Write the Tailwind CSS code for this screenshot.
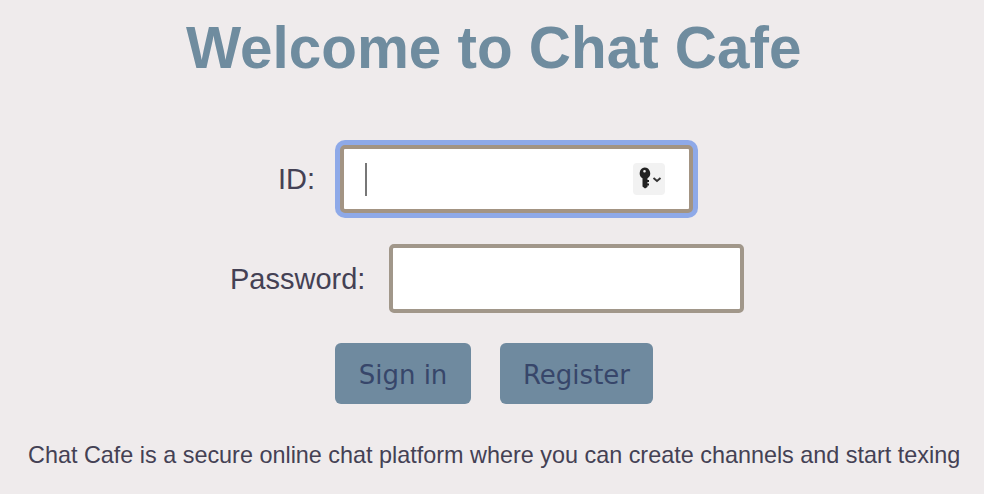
<!DOCTYPE html>
<html lang="en"><head><meta charset="utf-8"><title>Chat Cafe</title>
<script src="https://cdn.jsdelivr.net/npm/@tailwindcss/browser@4"></script></head>
<body class="h-[494px] overflow-hidden bg-[#efebec] font-['Liberation_Sans',Arial,sans-serif] text-[#444154]">
<main class="flex flex-col">
<h1 class="ml-[186px] mt-[14px] h-[68px] whitespace-nowrap text-[58.4px] leading-[68px] font-bold text-[#6f8c9f]">Welcome to Chat Cafe</h1>
<form class="flex flex-col">
<div class="ml-[278px] mt-[63px] flex h-[68px] items-center">
<label for="id" class="w-[62px] pt-[2px] text-[29px]">ID:</label>
<div id="id" class="flex h-[68px] w-[353px] items-center justify-between rounded-[5px] border-4 border-[#a39483] bg-white pl-[21px] pr-[24px] ring-[5px] ring-[#8ea9e8]">
<span class="h-[33px] w-[2px] bg-[#777]"></span>
<span class="flex h-8 w-8 items-center justify-center rounded bg-[#f2f2f2]"><svg viewBox="0 0 32 32" class="size-8"><path fill="#222" fill-rule="evenodd" d="M11.500 4.500a5.800 5.800 0 0 1 3 10.700V17h1.500v2h-1.500v1.500H16v2h-1.500V24l-2.500 1.500-2.500-2v-8.300a5.800 5.800 0 0 1 2-10.700Zm0 2.500a1.300 1.300 0 1 0 0 2.600 1.300 1.300 0 0 0 0-2.600Z"/><path d="m20.500 15 3.500 3 3.500-3" fill="none" stroke="#333" stroke-width="1.900"/></svg></span>
</div></div>
<div class="ml-[230px] mt-[31px] flex h-[69px] items-center">
<label for="password" class="w-[159px] pt-[2px] text-[29px]">Password:</label>
<input id="password" type="password" class="h-[69px] w-[355px] rounded-[5px] border-4 border-[#a1978a] bg-white"></div>
<div class="ml-[335px] mt-[30px] flex h-[61px] gap-[29px] font-['DejaVu_Sans',Verdana,sans-serif] text-[26px] text-[#37466a]">
<button type="button" class="w-[136px] rounded-[6px] bg-[#6f8a9f] pt-[3px]">Sign in</button>
<button type="button" class="w-[153px] rounded-[6px] bg-[#6f8a9f] pt-[3px]">Register</button></div>
</form>
<p class="ml-[28px] mt-[37px] whitespace-nowrap text-[23.4px] leading-7">Chat Cafe is a secure online chat platform where you can create channels and start texing</p>
</main></body></html>
